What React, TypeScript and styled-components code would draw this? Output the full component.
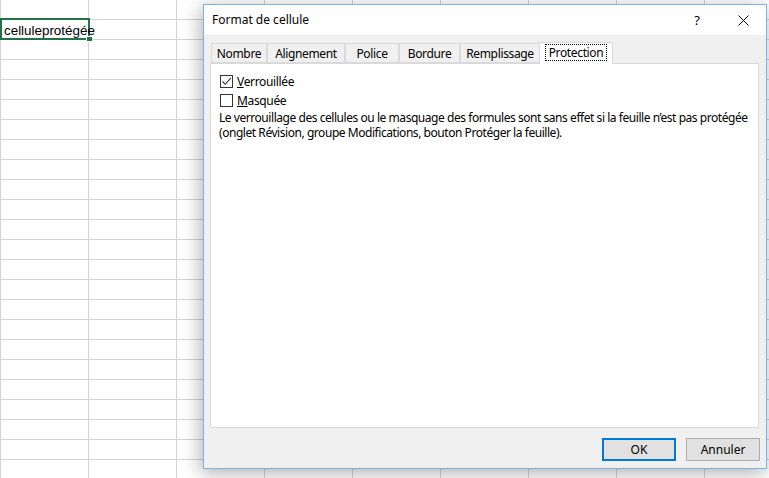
import styled, { createGlobalStyle } from "styled-components";

const GlobalStyle = createGlobalStyle`
    html, body {
        margin: 0;
        padding: 0;
        overflow: hidden;
        background: #ffffff;
    }
    #root {
        width: 769px;
        height: 478px;
        position: relative;
        overflow: hidden;
    }
`;

const COLS = 9;
const ROWS = 24;

const tabs = [
    { label: "Nombre", width: 56 },
    { label: "Alignement", width: 78 },
    { label: "Police", width: 54 },
    { label: "Bordure", width: 61 },
    { label: "Remplissage", width: 80 },
    { label: "Protection", width: 74, active: true },
];

const CheckIcon = () => (
    <svg width="11" height="11" viewBox="0 0 11 11">
        <path d="M1.5 5.5 L4.2 8.3 L9.8 2.2" fill="none" stroke="#333" strokeWidth="1.1" />
    </svg>
);

const CloseIcon = () => (
    <svg width="11" height="11" viewBox="0 0 11 11">
        <path d="M0.5 0.5 L10.5 10.5 M10.5 0.5 L0.5 10.5" stroke="#000" strokeWidth="1" />
    </svg>
);

const App = () => {
    const cells = [];
    for (let r = 0; r < ROWS; r++) {
        for (let c = 0; c < COLS; c++) {
            const selected = r === 1 && c === 0;
            cells.push(
                <Cell key={`${r}-${c}`} $selected={selected}>
                    {selected && (
                        <>
                            <CellText>celluleprotégée</CellText>
                            <Handle />
                        </>
                    )}
                </Cell>
            );
        }
    }

    return (
        <>
            <GlobalStyle />
            <Sheet>{cells}</Sheet>
            <Dialog>
                <TitleBar>
                    <Title>Format de cellule</Title>
                    <TitleButtons>
                        <HelpButton>?</HelpButton>
                        <CloseButton><CloseIcon /></CloseButton>
                    </TitleButtons>
                </TitleBar>
                <Body>
                    <TabStrip>
                        {tabs.map((t) => (
                            <Tab key={t.label} $width={t.width} $active={!!t.active}>
                                {t.active ? <Focus>{t.label}</Focus> : t.label}
                            </Tab>
                        ))}
                    </TabStrip>
                    <Panel>
                        <CheckRow>
                            <Box><CheckIcon /></Box>
                            <span><u>V</u>errouillée</span>
                        </CheckRow>
                        <CheckRow>
                            <Box />
                            <span><u>M</u>asquée</span>
                        </CheckRow>
                        <Note>
                            <NoteLine>Le verrouillage des cellules ou le masquage des formules sont sans effet si la feuille n’est pas protégée</NoteLine>
                            <NoteLine>(onglet Révision, groupe Modifications, bouton Protéger la feuille).</NoteLine>
                        </Note>
                    </Panel>
                </Body>
                <Footer>
                    <Button $primary>OK</Button>
                    <Button>Annuler</Button>
                </Footer>
            </Dialog>
        </>
    );
};

export default App;

const Sheet = styled.div`
    display: grid;
    grid-template-columns: repeat(${COLS}, 88px);
    grid-auto-rows: 20px;
`;

const Cell = styled.div<{ $selected?: boolean }>`
    position: relative;
    box-sizing: border-box;
    border-left: 1px solid #d4d4d4;
    border-bottom: 1px solid #d4d4d4;
    overflow: visible;
    z-index: ${(p) => (p.$selected ? 2 : 1)};

    ${(p) =>
        p.$selected &&
        `
        &::after {
            content: "";
            position: absolute;
            left: -1px;
            top: -2px;
            width: 90px;
            height: 22px;
            box-sizing: border-box;
            border: 2px solid #217346;
        }
    `}
`;

const CellText = styled.span`
    position: absolute;
    left: 3px;
    top: 2px;
    font-family: "Liberation Sans", Arial, sans-serif;
    font-size: 13.4px;
    line-height: 17px;
    color: #000;
    white-space: nowrap;
    z-index: 1;
`;

const Handle = styled.span`
    position: absolute;
    left: 85px;
    top: 16px;
    width: 6px;
    height: 6px;
    background: #217346;
    border: 1px solid #fff;
    border-right: none;
    box-sizing: border-box;
    z-index: 3;
`;

const Dialog = styled.div`
    position: absolute;
    left: 203px;
    top: 4px;
    width: 564px;
    height: 465px;
    box-sizing: border-box;
    border: 1px solid #7ab3e8;
    background: #f0f0f0;
    box-shadow: -2px 4px 18px rgba(0, 0, 0, 0.32);
    display: flex;
    flex-direction: column;
    font-family: "Noto Sans", "Open Sans", sans-serif;
    font-size: 12px;
    letter-spacing: -0.35px;
    color: #000;
    z-index: 10;
`;

const TitleBar = styled.div`
    height: 30px;
    background: #ffffff;
    display: flex;
    align-items: center;
    justify-content: space-between;
    padding-left: 8px;
`;

const Title = styled.div`
    font-size: 12px;
    letter-spacing: 0;
    margin-top: -2px;
`;

const TitleButtons = styled.div`
    display: flex;
    align-items: center;
    height: 100%;
`;

const HelpButton = styled.div`
    width: 46px;
    text-align: center;
    font-size: 13px;
    margin-top: -1px;
    margin-left: 2px;
`;

const CloseButton = styled.div`
    width: 46px;
    height: 100%;
    display: flex;
    align-items: center;
    justify-content: center;
`;

const Body = styled.div`
    flex: 1;
    display: flex;
    flex-direction: column;
    padding: 8px 7px 0 6px;
`;

const TabStrip = styled.div`
    display: flex;
    height: 20px;
    align-items: flex-end;
    padding-left: 1px;
    position: relative;
    z-index: 1;
`;

const Tab = styled.div<{ $width: number; $active?: boolean }>`
    box-sizing: border-box;
    width: ${(p) => p.$width}px;
    height: ${(p) => (p.$active ? 22 : 20)}px;
    margin-bottom: ${(p) => (p.$active ? -1 : 0)}px;
    margin-left: ${(p) => (p.$active ? -1 : 0)}px;
    background: ${(p) => (p.$active ? "#ffffff" : "#f0f0f0")};
    border: 1px solid #d9d9d9;
    border-bottom: ${(p) => (p.$active ? "none" : "1px solid #d9d9d9")};
    & + & {
        border-left: ${(p) => (p.$active ? "1px solid #d9d9d9" : "none")};
    }
    display: flex;
    align-items: center;
    justify-content: center;
    padding-bottom: ${(p) => (p.$active ? 2 : 0)}px;
    white-space: nowrap;
`;

const Focus = styled.span`
    outline: 1px dotted #000;
    outline-offset: 0;
    padding: 0 3px;
    line-height: 15px;
`;

const Panel = styled.div`
    flex: 1;
    box-sizing: border-box;
    background: #ffffff;
    border: 1px solid #d9d9d9;
    padding: 8px 8px 0 8px;
    display: flex;
    flex-direction: column;
`;

const CheckRow = styled.div`
    display: flex;
    align-items: center;
    height: 19px;
    gap: 4px;
`;

const Box = styled.div`
    box-sizing: border-box;
    width: 13px;
    height: 13px;
    border: 1px solid #333;
    background: #fff;
    display: flex;
    align-items: center;
    justify-content: center;
    margin-left: 1px;
`;

const Note = styled.div`
    display: flex;
    flex-direction: column;
    color: #000;
`;

const NoteLine = styled.div`
    height: 15px;
    line-height: 15px;
    white-space: nowrap;
    letter-spacing: -0.45px;
`;

const Footer = styled.div`
    height: 40px;
    display: flex;
    justify-content: flex-end;
    align-items: flex-start;
    padding: 10px 6px 0 0;
    box-sizing: border-box;
    gap: 10px;
`;

const Button = styled.div<{ $primary?: boolean }>`
    box-sizing: border-box;
    width: 74px;
    height: 23px;
    background: #e1e1e1;
    border: ${(p) => (p.$primary ? "2px solid #0078d7" : "1px solid #adadad")};
    display: flex;
    align-items: center;
    justify-content: center;
    font-size: 12px;
    letter-spacing: 0;
`;
